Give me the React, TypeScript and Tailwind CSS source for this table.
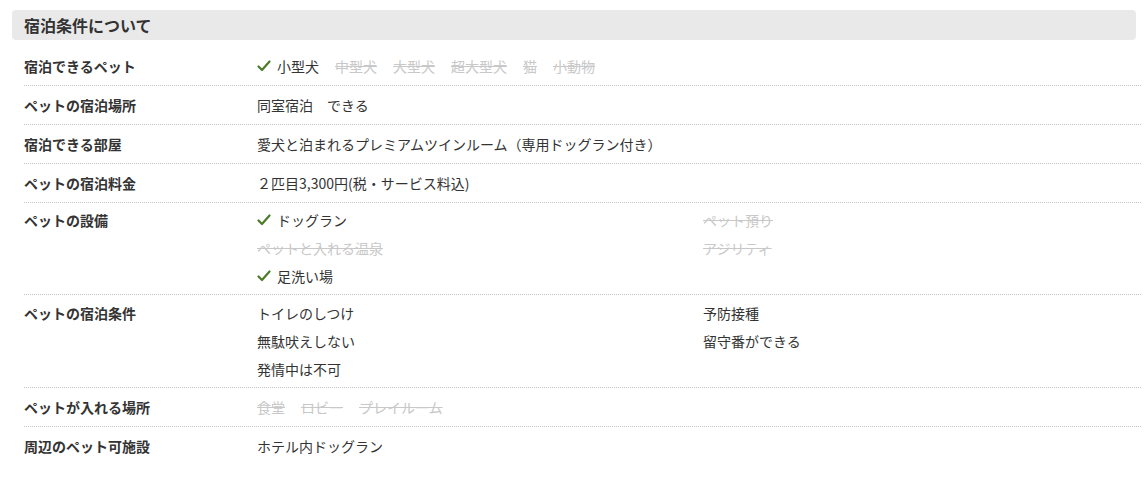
const font = { fontFamily: '"Noto Sans CJK JP", "Noto Sans", sans-serif' };

type Item = { label: string; ok: boolean };

const petSizes: Item[] = [
  { label: "小型犬", ok: true },
  { label: "中型犬", ok: false },
  { label: "大型犬", ok: false },
  { label: "超大型犬", ok: false },
  { label: "猫", ok: false },
  { label: "小動物", ok: false },
];

const facilities: Item[] = [
  { label: "ドッグラン", ok: true },
  { label: "ペット預り", ok: false },
  { label: "ペットと入れる温泉", ok: false },
  { label: "アジリティ", ok: false },
  { label: "足洗い場", ok: true },
];

const conditions = ["トイレのしつけ", "予防接種", "無駄吠えしない", "留守番ができる", "発情中は不可"];

const places: Item[] = [
  { label: "食堂", ok: false },
  { label: "ロビー", ok: false },
  { label: "プレイルーム", ok: false },
];

function CheckMark() {
  return (
    <svg width="14" height="12" viewBox="0 0 14 12" className="mr-[6px] shrink-0">
      <polyline points="1.5,6.5 5,10 12.5,1.5" fill="none" stroke="#4b7b2b" strokeWidth="2.2" strokeLinecap="round" strokeLinejoin="round" />
    </svg>
  );
}

function Tag({ label, ok }: Item) {
  if (ok) {
    return (
      <span className="inline-flex items-center text-[#333]">
        <CheckMark />
        {label}
      </span>
    );
  }
  return <span className="text-[#c8c8c8] line-through">{label}</span>;
}

function Row({ label, children, className = "py-[5px]" }: { label: string; children: React.ReactNode; className?: string }) {
  return (
    <div className={`flex border-b border-dotted border-[#c4c4c4] leading-[28px] ${className}`}>
      <div className="w-[233px] shrink-0 font-bold text-[#333]">{label}</div>
      <div className="flex-1 text-[#333]">{children}</div>
    </div>
  );
}

export default function App() {
  return (
    <div className="min-h-[477px] bg-white pt-[10px] text-[14px]" style={font}>
      <div className="mx-[12px] flex h-[30px] items-center rounded-[4px] bg-[#e9e9e9] pl-[12px] text-[16px] font-bold text-[#333]">
        宿泊条件について
      </div>
      <div className="ml-[24px] mr-[7px] mt-[7px]">
        <Row label="宿泊できるペット">
          <div className="flex gap-[16px]">
            {petSizes.map((p) => (
              <Tag key={p.label} {...p} />
            ))}
          </div>
        </Row>
        <Row label="ペットの宿泊場所">同室宿泊　できる</Row>
        <Row label="宿泊できる部屋">愛犬と泊まれるプレミアムツインルーム（専用ドッグラン付き）</Row>
        <Row label="ペットの宿泊料金">２匹目3,300円(税・サービス料込)</Row>
        <Row label="ペットの設備" className="pt-[3px] pb-[4px]">
          <div className="grid grid-cols-[446px_1fr]">
            {facilities.map((f) => (
              <div key={f.label}>
                <Tag {...f} />
              </div>
            ))}
          </div>
        </Row>
        <Row label="ペットの宿泊条件" className="py-[4px]">
          <div className="grid grid-cols-[446px_1fr]">
            {conditions.map((c) => (
              <div key={c}>{c}</div>
            ))}
          </div>
        </Row>
        <Row label="ペットが入れる場所">
          <div className="flex gap-[16px]">
            {places.map((p) => (
              <Tag key={p.label} {...p} />
            ))}
          </div>
        </Row>
        <div className="flex py-[5px] leading-[28px]">
          <div className="w-[233px] shrink-0 font-bold text-[#333]">周辺のペット可施設</div>
          <div className="flex-1 text-[#333]">ホテル内ドッグラン</div>
        </div>
      </div>
    </div>
  );
}
